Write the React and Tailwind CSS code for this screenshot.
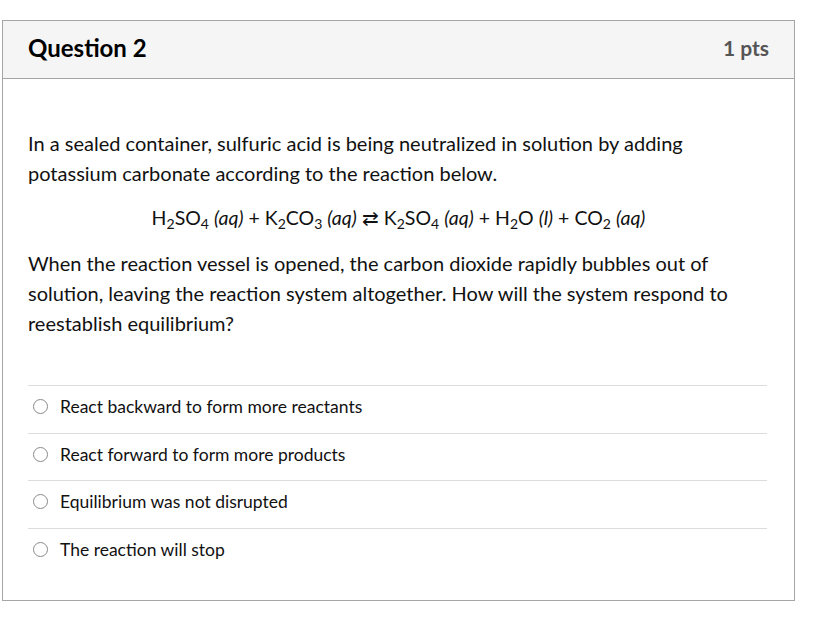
import React from "react";

const answers = [
  "React backward to form more reactants",
  "React forward to form more products",
  "Equilibrium was not disrupted",
  "The reaction will stop",
];

function Sub({ children }) {
  return <sub className="text-[14px] align-baseline relative top-[4px]">{children}</sub>;
}

export default function App() {
  return (
    <div className="min-h-screen bg-white pt-[20px] pl-[2px]" style={{ fontFamily: "Lato, 'Liberation Sans', sans-serif" }}>
      <div className="w-[793px] h-[581px] border border-[#a5a5a5] bg-white">
        <div className="h-[58px] bg-[#f5f5f5] border-b border-[#a5a5a5] flex items-center justify-between pl-[25px] pr-[25px] pb-[3px]">
          <h2 className="text-[24px] font-bold text-black">Question 2</h2>
          <span className="text-[21px] font-bold text-[#555]">1 pts</span>
        </div>
        <div className="px-[25px] pt-[49px] text-[20px] leading-[30px] text-[#111]">
          <p className="pr-[40px]">
            In a sealed container, sulfuric acid is being neutralized in solution by adding potassium carbonate according to the reaction below.
          </p>
          <p className="text-center mt-[15px] text-[19.5px]">
            H<Sub>2</Sub>SO<Sub>4</Sub> <i>(aq)</i> + K<Sub>2</Sub>CO<Sub>3</Sub> <i>(aq)</i> ⇄ K<Sub>2</Sub>SO<Sub>4</Sub> <i>(aq)</i> + H<Sub>2</Sub>O <i>(l)</i> + CO<Sub>2</Sub> <i>(aq)</i>
          </p>
          <p className="mt-[15px] pr-[40px]">
            When the reaction vessel is opened, the carbon dioxide rapidly bubbles out of solution, leaving the reaction system altogether. How will the system respond to reestablish equilibrium?
          </p>
          <div className="mt-[47px] mr-[2px]">
            {answers.map((a) => (
              <label key={a} className="flex items-start h-[47.7px] pt-[9px] border-t border-[#dcdcdc] text-[17.5px] leading-[24px]">
                <span className="mt-[4px] ml-[5px] w-[15px] h-[15px] rounded-full border-[1.5px] border-[#8a8a8a] bg-white shrink-0" />
                <span className="ml-[12px] text-[#111]">{a}</span>
              </label>
            ))}
          </div>
        </div>
      </div>
    </div>
  );
}
